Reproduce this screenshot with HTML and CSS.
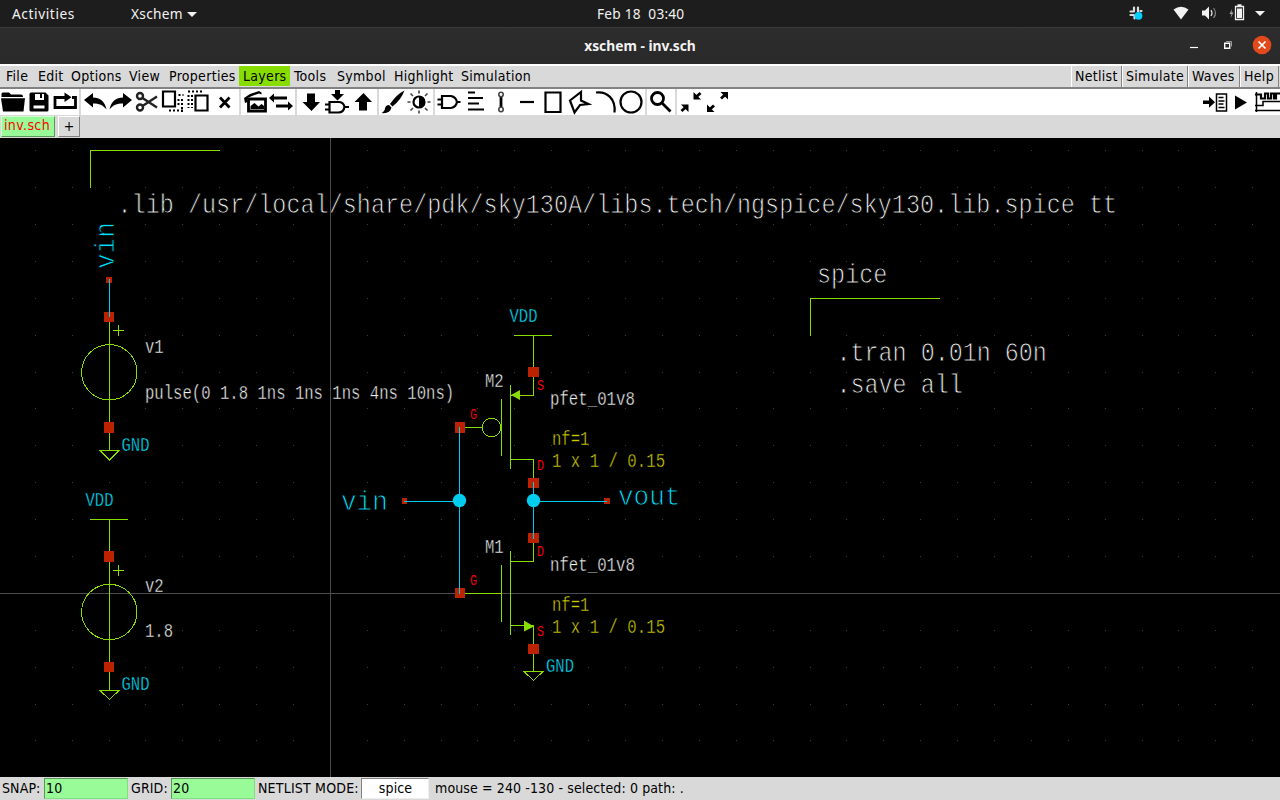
FILE: index.html
```html
<!DOCTYPE html>
<html lang="en">
<head>
<meta charset="utf-8">
<title>xschem - inv.sch</title>
<link rel="stylesheet" href="styles.css">
</head>
<body>
<div class="desktop">
  <header class="topbar">
    <span class="activities">Activities</span>
    <span class="appmenu">Xschem <i class="caret"></i></span>
    <span class="clock">Feb 18&nbsp; 03:40</span>
    <svg class="tray" width="160" height="27" viewBox="0 0 160 27">
      <g stroke="#ddd" stroke-width="2.2" stroke-linecap="round" fill="none">
        <path d="M14 7.500v3M10.500 11.500h3.500M18 7.500v4M21.500 11h-1M10.500 15h3M14.500 15.500v3"/>
      </g>
      <circle cx="18.500" cy="15.800" r="3.900" fill="#00cfff"/>
      <path d="M53.500 9.500Q61 4 68.500 9.500L61 19.500Z" fill="#f2f2f2"/>
      <path d="M82 10.500h3l4-4v13l-4-4h-3z" fill="#f2f2f2"/>
      <path d="M91 10q2 3 0 6" stroke="#ddd" fill="none" stroke-width="1.300"/>
      <path d="M93.500 8q4 5 0 10" stroke="#888" fill="none" stroke-width="1.200"/>
      <path d="M112 9l-2.500 5h2l-1 4 3-5.500h-2z" fill="#aaa"/>
      <path d="M115.500 6.500h8v13h-8zM117.500 5h4" fill="none" stroke="#f2f2f2" stroke-width="1.300"/>
      <path d="M117 8.500h5v9.500h-5z" fill="#f2f2f2"/>
      <path d="M135 11h10l-5 5z" fill="#f2f2f2"/>
    </svg>
  </header>
  <div class="titlebar">
    <span class="title">xschem - inv.sch</span>
    <svg class="winctl" width="100" height="36" viewBox="0 0 100 36">
      <path d="M10 19.500h8" stroke="#fff" stroke-width="1.200"/>
      <path d="M44.700 15.200h5v5h-5z" fill="none" stroke="#fff" stroke-width="1.400"/>
      <path d="M46 13.500h5.500v5" fill="none" stroke="#999" stroke-width="1"/>
      <circle cx="82" cy="17" r="9.300" fill="#e2491b"/>
      <path d="M78.500 13.500l7 7M85.500 13.500l-7 7" stroke="#fff" stroke-width="1.700"/>
    </svg>
  </div>
  <nav class="menubar">
    <div class="menus">
      <span class="m" style="width:32px">File</span><span class="m" style="width:33px">Edit</span><span class="m" style="width:58px">Options</span><span class="m" style="width:40px">View</span><span class="m" style="width:74px">Properties</span><span class="m active" style="width:51px">Layers</span><span class="m" style="width:43px">Tools</span><span class="m" style="width:57px">Symbol</span><span class="m" style="width:67px">Highlight</span><span class="m" style="width:78px">Simulation</span>
    </div>
    <div class="actions">
      <span class="a" style="width:51px">Netlist</span><span class="a" style="width:66px">Simulate</span><span class="a" style="width:52px">Waves</span><span class="a" style="width:39px">Help</span>
    </div>
  </nav>
  <div class="toolbar">
    <svg viewBox="0 0 26 26"><path class="f" d="M1.500 8V5q0-1.500 1.500-1.500h6l2 2h10q2 0 2 2V8z"/><path class="f" d="M1 9.300h24L23.500 22.500H3z"/></svg>
    <svg viewBox="0 0 26 26"><path class="f" fill-rule="evenodd" d="M3.500 5q0-1.500 1.500-1.500h14.500l3 3V21q0 1.500-1.500 1.500H5q-1.500 0-1.500-1.500zM9 5v6h9V5h-2v4h-2V5zM7.500 16.500v3h11v-3z"/></svg>
    <svg viewBox="0 0 26 26"><path class="s3" d="M10 8.500H3v10h20.500v-10H20"/><path class="f" d="M12.500 3.500v9.500l7-4.800z"/><path class="f" d="M8 7h6v3H8z"/></svg>
    <i class="sep"></i>
    <svg viewBox="0 0 26 26"><path class="f" d="M2 11l9-7v4.500c7 0 12 4 13.500 12C21 16 17 14.500 11 14.500v4z"/></svg>
    <svg viewBox="0 0 26 26"><path class="f" d="M24 11l-9-7v4.500c-7 0-12 4-13.500 12C5 16 9 14.500 15 14.500v4z"/></svg>
    <svg viewBox="0 0 26 26"><g class="scissors"><circle cx="6" cy="7" r="3"/><circle cx="6" cy="18.500" r="3"/><path d="M8.500 9l14.500 9.500M8.500 17l14.500-9.500"/></g></svg>
    <svg viewBox="0 0 26 26"><path class="s2" d="M3 2.500h12v15H3z"/><path class="dash" d="M18.500 6h5M22 10v13M18.500 10v8M9 21.500h14"/></svg>
    <svg viewBox="0 0 26 26"><path class="s2" d="M9.500 6.500h12v15h-12z"/><path class="dash" d="M2 2.500h14M2.500 6v13M6 6v13"/></svg>
    <svg viewBox="0 0 26 26"><path class="s3" d="M8 8.500l9.500 10M17.500 8.500l-9.500 10"/></svg>
    <i class="sep"></i>
    <svg viewBox="0 0 26 26"><path class="f" d="M2 9l6-4 9-3 2.500 1.500v2L17 4.500 10 7 5.500 9v4L3 14zM8.500 20v-3l4-3 4 3.500 3-2.500 2.500 2v3z"/><path class="s3" d="M6.500 10h17v12h-17z"/></svg>
    <svg viewBox="0 0 26 26"><path class="f" d="M1 9l5-4.500v3h13v3H6v3zM25 17l-5-4.500v3H8v3h12v3z"/></svg>
    <i class="sep"></i>
    <svg viewBox="0 0 26 26"><path class="f" d="M9 4.500h8v8.500h5L13.500 22 4.500 13H9z"/></svg>
    <svg viewBox="0 0 26 26"><path class="s2" d="M5.500 13h9q5 0 6 5-1 5.500-6 5.500h-9zM1 15.500h4M1 20.500h4M20.500 18H25"/><path class="f" d="M11 1h5v4h4l-6.500 6.500L7 5h4z"/></svg>
    <svg viewBox="0 0 26 26"><path class="f" d="M9 21.500h8V13h5L13.500 4 4.500 13H9z"/></svg>
    <i class="sep"></i>
    <svg viewBox="0 0 26 26"><path class="f" d="M24.500 1.500Q17 5 10 15l2.500 2.500Q21 11 24.500 1.500zM9 16l2.500 2.500Q10 25 1.500 24q3.500-2 3.500-5 1-3 4-3z"/></svg>
    <svg viewBox="0 0 26 26"><circle class="s2" cx="13" cy="13" r="5.500"/><path class="f" d="M13 7.500a5.500 5.500 0 0 1 0 11z"/><path class="gray" d="M13 1.500v3M13 21.500v3M1.500 13h3M21.500 13h3M4.500 4.500l2.500 2.500M19 19l2.500 2.500M21.500 4.500L19 7M7 19l-2.500 2.500"/></svg>
    <i class="sep"></i>
    <svg viewBox="0 0 26 26"><path class="s2" d="M6 7h9q5 1 6 6-1 5-6 6H6zM1.500 10.500H6M1.500 15.500H6M20 13h4.500"/></svg>
    <svg viewBox="0 0 26 26"><path class="s2" d="M6 3.500h7M6 9h15M6 14.500h11M6 20.500h16"/></svg>
    <svg viewBox="0 0 26 26"><path class="s3" d="M13 8v10"/><circle class="gray" cx="13" cy="5.500" r="2.200"/><circle class="gray" cx="13" cy="20.500" r="2.200"/></svg>
    <svg viewBox="0 0 26 26"><path class="s2" d="M6 13h14"/></svg>
    <svg viewBox="0 0 26 26"><path class="s2" d="M5.500 3.500h15v19.500h-15z"/></svg>
    <svg viewBox="0 0 26 26"><path class="s2" d="M4 11.500l11-8.500v8.500L22.500 15l-8.500 1-5.500 7.500z"/></svg>
    <svg viewBox="0 0 26 26"><path class="s2" d="M4 3.500C15 2 24 10 22.500 23.500"/></svg>
    <svg viewBox="0 0 26 26"><circle class="s2" cx="13" cy="13" r="10.500"/></svg>
    <i class="sep"></i>
    <svg viewBox="0 0 26 26"><circle class="s3" cx="9.500" cy="9.500" r="6"/><path class="s3" d="M14 14l8.500 8.500"/></svg>
    <i class="sep"></i>
    <svg viewBox="0 0 26 26"><path class="f" d="M15.500 3v7.500H23zM10.500 23v-7.500H3z"/><path class="s3" d="M17 9l5.500-5M9 17l-5.500 5"/></svg>
    <svg viewBox="0 0 26 26"><path class="f" d="M24 10.500V3h-7.500zM3 15.500V23h7.500z"/><path class="s3" d="M22.500 4.500L17 9.500M4.500 21.500l5.500-5"/></svg>
    <span class="spacer"></span>
    <svg viewBox="0 0 26 26"><path class="f" d="M1 11.500h6V7.500l6 5.700-6 5.600V15H1z"/><path class="thin" d="M14.500 5h10v17h-10zM16.500 8.500h5M16.500 12h6M16.500 15h5M16.500 18.500h6"/></svg>
    <svg viewBox="0 0 26 26"><path class="f" d="M7 6.500L19 13.500 7 20.500z"/></svg>
    <svg viewBox="0 0 26 26"><path class="thin" d="M2.500 3v20M1 21.500h25M1 16.500h8v-4h17"/><path class="s2" d="M1 5.500h6v4h4v-5h3v5h3v-5h3v5h2v-5h4"/></svg>
  </div>
  <div class="tabs"><span class="tab current">inv.sch</span><span class="tab add">+</span></div>
  <svg class="canvas" width="1280" height="639" viewBox="0 138 1280 639">
    <g id="grid" fill="#3c3c3c" shape-rendering="crispEdges"></g>

    <g class="big white">
      <text transform="translate(117.500 213.300) scale(.838 1)">.lib /usr/local/share/pdk/sky130A/libs.tech/ngspice/sky130.lib.spice tt</text>
      <text transform="translate(817 283.300) scale(.839 1)">spice</text>
      <text transform="translate(836.500 361) scale(.835 1)">.tran 0.01n 60n</text>
      <text transform="translate(836.500 392.500) scale(.835 1)">.save all</text>
    </g>
    <g class="big cyan">
      <text transform="translate(341 510) scale(.93 1)">vin</text>
      <text transform="translate(618 505) scale(.93 1)">vout</text>
      <text transform="translate(114 269) rotate(-90) scale(.93 1)">vin</text>
    </g>
    <g class="small white">
      <text transform="translate(145 352.500) scale(.8 1)">v1</text>
      <text transform="translate(145 398.500) scale(.801 1)">pulse(0 1.8 1ns 1ns 1ns 4ns 10ns)</text>
      <text transform="translate(145 591.500) scale(.8 1)">v2</text>
      <text transform="translate(145 637) scale(.8 1)">1.8</text>
      <text transform="translate(485 386.500) scale(.8 1)">M2</text>
      <text transform="translate(485 552.500) scale(.8 1)">M1</text>
      <text transform="translate(550 404.500) scale(.807 1)">pfet_01v8</text>
      <text transform="translate(550 570.500) scale(.807 1)">nfet_01v8</text>
    </g>
    <g class="small cyan">
      <text transform="translate(121.500 451.300) scale(.8 1)">GND</text>
      <text transform="translate(121.500 690.300) scale(.8 1)">GND</text>
      <text transform="translate(546 672.300) scale(.8 1)">GND</text>
      <text transform="translate(85.500 506.300) scale(.8 1)">VDD</text>
      <text transform="translate(509.500 322.300) scale(.8 1)">VDD</text>
    </g>
    <g class="small yellow">
      <text transform="translate(552 444.500) scale(.8 1)">nf=1</text>
      <text transform="translate(552 467.300) scale(.805 1)">1 x 1 / 0.15</text>
      <text transform="translate(552 610.500) scale(.8 1)">nf=1</text>
      <text transform="translate(552 633.300) scale(.805 1)">1 x 1 / 0.15</text>
    </g>
    <g class="tiny red">
      <text transform="translate(537 390.300) scale(.75 1)">S</text>
      <text transform="translate(537 470.300) scale(.75 1)">D</text>
      <text transform="translate(470 419.300) scale(.75 1)">G</text>
      <text transform="translate(537 556.300) scale(.75 1)">D</text>
      <text transform="translate(470 585.300) scale(.75 1)">G</text>
      <text transform="translate(537 636.300) scale(.75 1)">S</text>
    </g>

    <path class="cross" d="M330.500 138v639M0 593.500h1280"/>
    <g class="shape">
      <path d="M90.500 187.500V150.500H220M810.500 335.500V298.500H940"/>
      <path d="M109.500 317V450M113 330.500h11M118.500 325v11M100 450.500h19l-9.500 9.500z"/>
      <path d="M90 519.500h38M109.500 519V690M113 570.500h11M118.500 565v11M100 690.500h19l-9.500 9z"/>
      <circle cx="109.300" cy="372.300" r="27.700"/>
      <circle cx="109.300" cy="612" r="27.700"/>
      <path d="M514 335.500h38M533.500 335v60.500H510M510.500 385v84M501.500 399v57M460 427.500h22M510 459.500h23.500V483"/>
      <circle cx="491.500" cy="427.500" r="9.300"/>
      <path d="M533.500 540v21.500H510M510.500 551v84M501.500 565v57M460 593.500h41M510 625.500h23.500V671M524 671.500h19l-9.500 9z"/>
    </g>
    <path fill="#88dd00" d="M511 395l9-5v10zM524 620.500v11l10-5z"/>
    <g class="pin">
      <path d="M106 277h6v6h-6zM104 312h10v10h-10zM104 422h10v11h-10zM104 551h10v11h-10zM104 662h10v10h-10z"/>
      <path d="M528 367h11v10h-11zM528 478h11v10h-11zM528 533h11v10h-11zM528 644h11v10h-11z"/>
      <path d="M455 422h10v11h-10zM455 588h10v10h-10zM402 498h5v6h-5zM604 498h6v6h-6z"/>
    </g>
    <path class="wire" d="M109.500 279v38M459.500 427v167M533.500 482v57M404 501.500h55M533 501.500h74"/>
    <g fill="#00ccee"><circle cx="459.500" cy="500.500" r="6.700"/><circle cx="533.500" cy="500.500" r="6.700"/></g>
  </svg>
  <footer class="status">
    <span class="lbl snap">SNAP:</span><span class="entry">10</span>
    <span class="lbl gridlbl">GRID:</span><span class="entry">20</span>
    <span class="lbl mode">NETLIST MODE:</span><span class="entry spice">spice</span>
    <span class="lbl info">mouse = 240 -130 - selected: 0 path: .</span>
  </footer>
</div>
<script src="canvas.js"></script>
</body>
</html>
```
FILE: styles.css
```css
* { box-sizing: border-box; }
body { margin: 0; background: #000; }
.desktop {
  width: 1280px; height: 800px; overflow: hidden;
  display: flex; flex-direction: column;
  font: 14px "DejaVu Sans Condensed", "DejaVu Sans", sans-serif;
  font-stretch: condensed;
  color: #000; background: #d9d9d9;
}
.topbar, .titlebar { font-family: "Noto Sans", "Open Sans", sans-serif; font-stretch: normal; color: #f2f2f2; }
.topbar {
  height: 28px; flex: none; background: #1d1d1d; border-bottom: 1px solid #3a3a3a;
  display: grid; grid-template-columns: 131px 466px 1fr 160px; line-height: 27px; font-size: 13.7px;
}
.activities { padding-left: 12px; letter-spacing: 0.6px; }
.appmenu { letter-spacing: 0.3px; }
.clock { letter-spacing: 0.22px; }
.caret { display: inline-block; border: 5px solid transparent; border-top-color: #f2f2f2; border-bottom: 0; vertical-align: 2px; }
.titlebar {
  height: 36px; flex: none; background: linear-gradient(#2d2d2d, #292929);
  display: grid; grid-template-columns: 1fr auto 1fr; line-height: 36px; font-size: 13.8px; font-weight: 700;
}
.title { grid-column: 2; }
.winctl { justify-self: end; }
.menubar {
  height: 25px; flex: none; display: flex; justify-content: space-between;
  border-top: 2px solid #fff; border-bottom: 2px solid #828282; padding: 0 1px 0 2px;
  letter-spacing: 0.3px;
}
.menus, .actions { display: flex; line-height: 20px; white-space: nowrap; }
.m { padding-left: 4px; height: 20px; }
.active { background: #88dd00; }
.a { height: 21px; border-left: 1px solid #fff; border-right: 1px solid #828282; padding-left: 3px; }
.toolbar { height: 26px; flex: none; background: #fff; display: flex; }
.toolbar svg { width: 26px; height: 26px; flex: none; }
.sep { width: 2px; margin: 0 1px; background: #d9d9d9; flex: none; }
.spacer { flex: 1; }
.f { fill: #000; }
.s2 { fill: none; stroke: #000; stroke-width: 2.2; }
.s3 { fill: none; stroke: #000; stroke-width: 2.8; }
.thin { fill: none; stroke: #000; stroke-width: 1.5; }
.gray { fill: none; stroke: #444; stroke-width: 1.6; }
.scissors { fill: none; stroke: #222; stroke-width: 2.4; }
.dash { fill: none; stroke: #000; stroke-width: 2; stroke-dasharray: 2 2; }
.tabs { height: 23px; flex: none; display: flex; gap: 3px; padding: 1px 1px; }
.tab { height: 21px; border: 1px solid #fff; border-right-color: #828282; border-bottom-color: #828282; line-height: 19px; text-align: center; }
.current { width: 54px; background: #98fb98; color: #f00; border-color: #d0fdd0 #5b975b #5b975b #d0fdd0; line-height: 17px; letter-spacing: 0.4px; padding-right: 2px; }
.add { width: 22px; }
.canvas { display: block; flex: none; background: #000; }
.canvas text { font-family: "Liberation Mono", monospace; white-space: pre; stroke: #000; }
.big { font-size: 28px; stroke-width: 0.9px; }
.small { font-size: 19.5px; stroke-width: 0.4px; }
.tiny { font-size: 15.5px; stroke-width: 0.1px; }
.white { fill: #f0f0f0; }
.cyan { fill: #00e0ff; }
.yellow { fill: #cccc00; }
.red { fill: #f00; }
.cross { stroke: #4c4c4c; fill: none; shape-rendering: crispEdges; }
.shape { stroke: #88dd00; fill: none; shape-rendering: crispEdges; }
.wire { stroke: #00ccee; fill: none; shape-rendering: crispEdges; }
.pin { fill: #bb2200; }
.status { height: 23px; flex: none; display: flex; line-height: 22px; white-space: nowrap; letter-spacing: 0.12px; }
.lbl { padding-left: 2px; }
.snap { width: 44px; }
.gridlbl { width: 43px; padding-left: 3px; }
.mode { width: 106px; padding-left: 3px; letter-spacing: 0.2px; }
.info { padding-left: 6px; }
.entry { width: 84px; height: 21px; margin-top: 1px; line-height: 18px; padding-left: 1px; background: #98fb98; border: 1px solid; border-color: #5b975b #80e080 #80e080 #5b975b; }
.spice { width: 68px; background: #fff; border-color: #828282 #eee #eee #828282; text-align: center; }
```
FILE: canvas.js
```js
// Snap-grid dots, spaced 20 schematic units apart.
const step = 36.89;
const grid = document.getElementById("grid");
for (let y = 150.7; y < 777; y += step) {
  for (let x = 109.1 - 2 * step; x < 1280; x += step) {
    const dot = document.createElementNS("http://www.w3.org/2000/svg", "rect");
    dot.setAttribute("x", Math.floor(x));
    dot.setAttribute("y", Math.floor(y));
    dot.setAttribute("width", 1);
    dot.setAttribute("height", 1);
    grid.appendChild(dot);
  }
}
```
